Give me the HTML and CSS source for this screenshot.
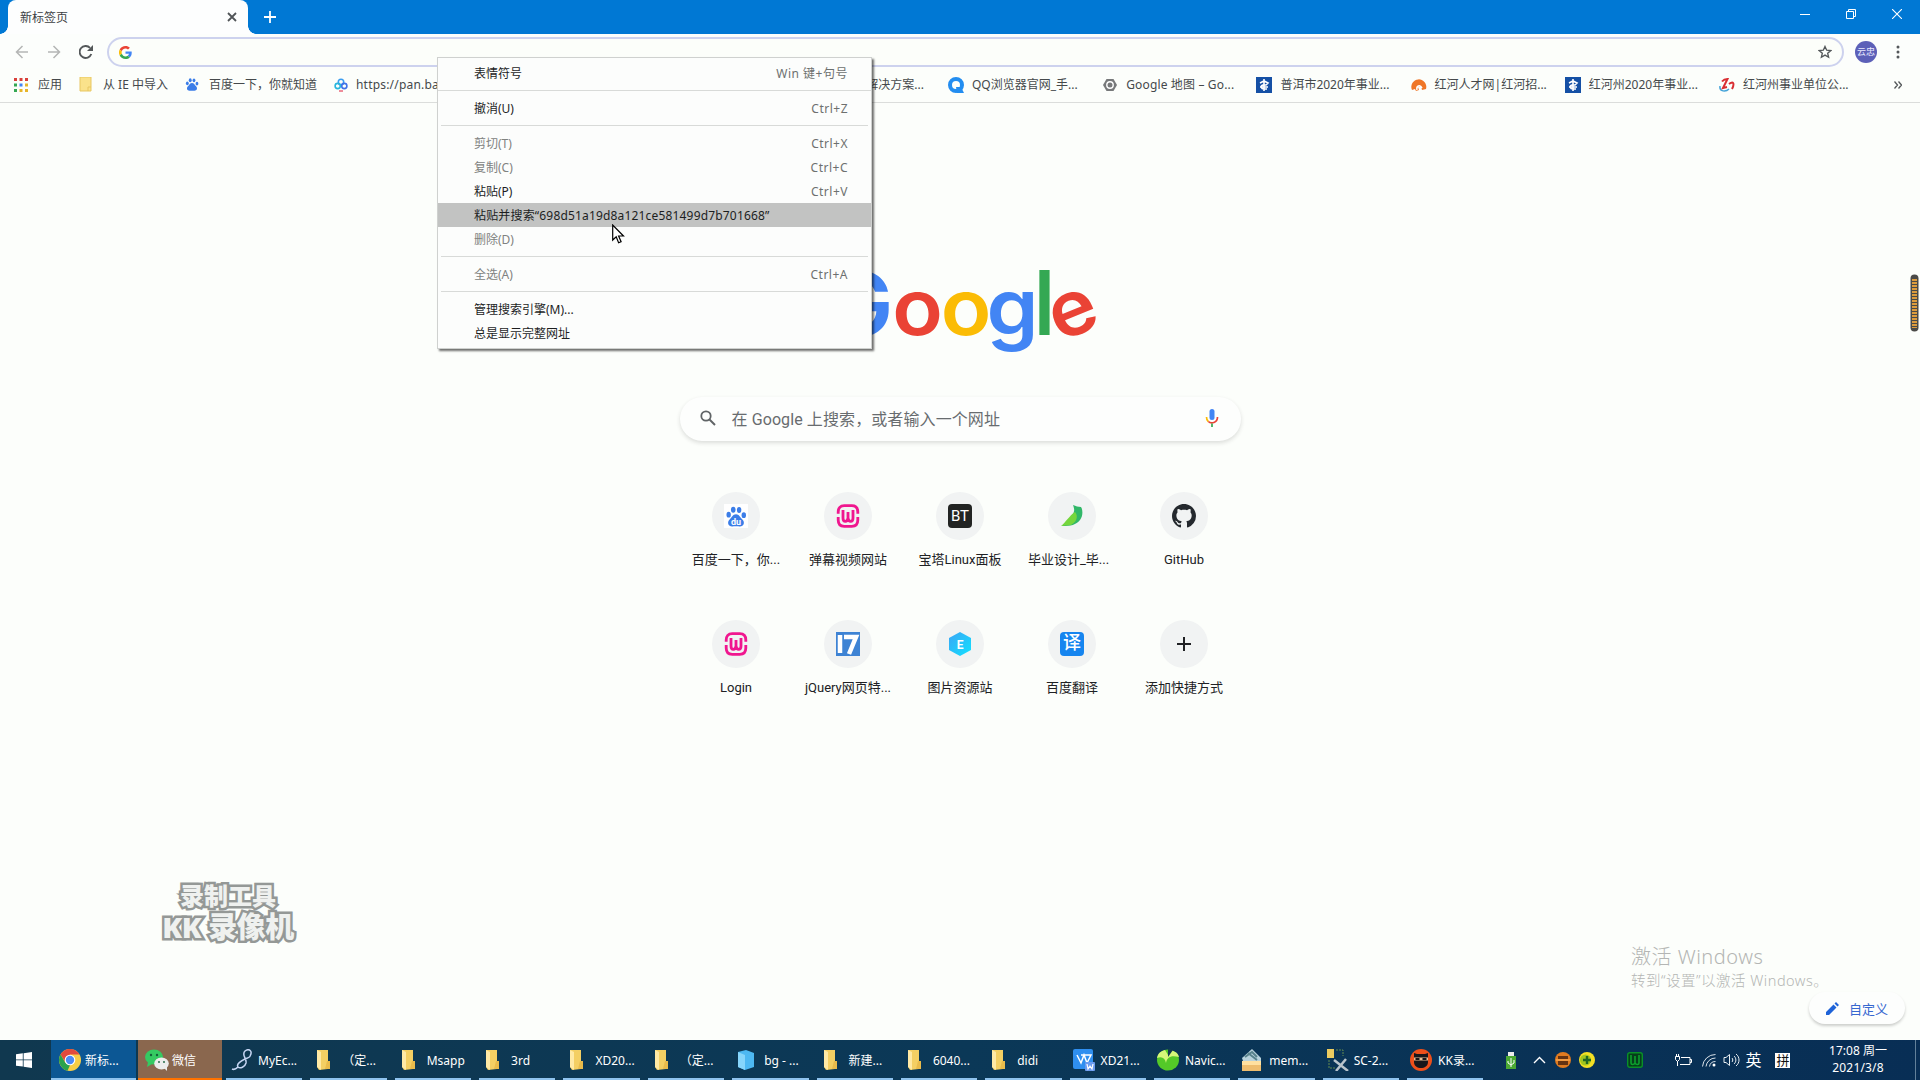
FILE: index.html
```html
<!DOCTYPE html>
<html lang="zh-CN">
<head>
<meta charset="utf-8">
<title>新标签页</title>
<link rel="stylesheet" href="styles.css">
</head>
<body>
<svg class="defs" width="0" height="0">
  <defs>
    <symbol id="folder" viewBox="0 0 16 22" preserveAspectRatio="xMinYMid meet"><path d="M2 1h11v19l-9 1-2-3z" fill="#f4cf63"/><path d="M2 1l4 2v18l-4-3z" fill="#ffe9a5"/><path d="M12 12h3v8h-5z" fill="#e9bb4b"/></symbol>
    <symbol id="paw" viewBox="0 0 24 24"><g fill="#3b7de8"><ellipse cx="4" cy="10" rx="2.4" ry="3.2"/><ellipse cx="9" cy="4.7" rx="2.5" ry="3.3"/><ellipse cx="15.4" cy="4.9" rx="2.4" ry="3.3"/><ellipse cx="20.5" cy="10.5" rx="2.4" ry="3.1"/><path d="M12 9.5c3.500 0 4.300 3.300 6.500 5.200 4 3.600 1.800 8.300-2.500 8.100-2-.1-6-.1-8 0-4.300.2-6.500-4.500-2.500-8.100C7.700 12.800 8.500 9.500 12 9.500z"/></g></symbol>
    <symbol id="wing" viewBox="0 0 24 24"><path d="M2.200 9.800V8c0-4 2-6.300 6-6.300h7.600c4 0 6 2.300 6 6.300v1.800M2.200 13v3c0 4 2 6.300 6 6.300h7.600c4 0 6-2.300 6-6.300v-3" fill="none" stroke="#f0168f" stroke-width="2.800"/><path d="M7 6v8c0 4.500 4.500 4.500 5 0V8v6c.5 4.500 5 4.500 5 0V6" fill="none" stroke="#f0168f" stroke-width="2.800"/></symbol>
    <symbol id="exam" viewBox="0 0 16 16"><path d="M0 0h16v16H0z" fill="#1550a5"/><path d="M4 6l4-2 4 2-2 2H7c-3 1-2 4 1 4h3M8 2v12M4 10h8" fill="none" stroke="#fff" stroke-width="1.600"/></symbol>
  </defs>
</svg>

<div class="screen">
  <header class="titlebar">
    <div class="tab"><span>新标签页</span>
      <svg width="10" height="10" viewBox="0 0 10 10"><path d="M1 1l8 8M9 1L1 9" stroke="#505457" stroke-width="1.800"/></svg>
    </div>
    <svg class="new-tab" width="12" height="12" viewBox="0 0 12 12"><path d="M6 0v12M0 6h12" stroke="#fff" stroke-width="1.800"/></svg>
    <div class="controls">
      <svg width="10" height="10" viewBox="0 0 10 10"><path d="M0 5.500h10" stroke="#fff"/></svg>
      <svg width="10" height="10" viewBox="0 0 10 10"><path d="M.5 2.500h7v7h-7zM2.500 2.500v-2h7v7h-2" fill="none" stroke="#fff"/></svg>
      <svg width="10" height="10" viewBox="0 0 10 10"><path d="M0 0l10 10M10 0L0 10" stroke="#fff" stroke-width="1.100"/></svg>
    </div>
  </header>

  <div class="toolbar">
    <svg width="14" height="14" viewBox="0 0 14 14"><path d="M13 7H2M7.500 1L1.500 7l6 6" fill="none" stroke="#b4b6b5" stroke-width="1.500"/></svg>
    <svg width="14" height="14" viewBox="0 0 14 14"><path d="M1 7h11M6.500 1l6 6-6 6" fill="none" stroke="#b4b6b5" stroke-width="1.500"/></svg>
    <svg width="14" height="14" viewBox="0 0 14 14"><path d="M12.300 9A6 6 0 1 1 11 2.800" fill="none" stroke="#54585a" stroke-width="1.900"/><path d="M14 0v6H8z" fill="#54585a"/></svg>
    <div class="omnibox">
      <svg width="13" height="13" viewBox="0 0 48 48"><path fill="#ea4335" d="M24 9.500c3.540 0 6.710 1.220 9.210 3.600l6.850-6.850C35.900 2.380 30.470 0 24 0 14.620 0 6.510 5.380 2.560 13.220l7.980 6.190C12.430 13.720 17.740 9.500 24 9.500z"/><path fill="#4285f4" d="M46.980 24.550c0-1.570-.15-3.090-.38-4.550H24v9.020h12.940c-.58 2.960-2.260 5.480-4.780 7.180l7.730 6c4.510-4.180 7.090-10.360 7.090-17.650z"/><path fill="#fbbc05" d="M10.530 28.590a14.500 14.500 0 0 1 0-9.180l-7.980-6.190a24 24 0 0 0 0 21.560z"/><path fill="#34a853" d="M24 48c6.480 0 11.930-2.130 15.890-5.810l-7.730-6c-2.150 1.450-4.920 2.300-8.160 2.300-6.260 0-11.570-4.220-13.470-9.910l-7.980 6.190C6.510 42.620 14.620 48 24 48z"/></svg>
      <svg width="14" height="14" viewBox="0 0 24 24"><path d="M12 2.500l2.900 6.400 7 .7-5.300 4.600 1.600 6.800-6.200-3.600L5.800 21l1.600-6.800L2.100 9.600l7-.7z" fill="none" stroke="#54585a" stroke-width="2.300"/></svg>
    </div>
    <div class="avatar">云忠</div>
    <svg width="4" height="14" viewBox="0 0 4 14"><g fill="#54585a"><circle cx="2" cy="2" r="1.500"/><circle cx="2" cy="7" r="1.500"/><circle cx="2" cy="12" r="1.500"/></g></svg>
  </div>

  <nav class="bookmarks">
    <div class="bm bm-apps"><svg width="14" height="14" viewBox="0 0 14 14"><path d="M0 0h3v3H0zM5.500 0h3v3h-3zM11 0h3v3h-3z" fill="#d9403a"/><path d="M0 5.500h3v3H0z" fill="#35a853"/><path d="M5.500 5.500h3v3h-3z" fill="#4285f4"/><path d="M11 5.500h3v3h-3zM5.500 11h3v3h-3zM11 11h3v3h-3z" fill="#e8b52a"/><path d="M0 11h3v3H0z" fill="#35a853"/></svg><span>应用</span></div>
    <div class="bm bm-ie"><svg width="14" height="15" viewBox="0 0 14 15"><path d="M1 0h11v14H1z" fill="#fae28b"/><path d="M1 0h11v14H1zM9 14v-4h3" fill="none" stroke="#e8c763"/></svg><span>从 IE 中导入</span></div>
    <div class="bm bm-baidu"><svg width="14" height="15"><use href="#paw"/></svg><span>百度一下，你就知道</span></div>
    <div class="bm bm-pan"><svg width="14" height="14" viewBox="0 0 14 14"><g fill="none" stroke-width="1.600"><circle cx="7" cy="4" r="2.700" stroke="#3b9df0"/><circle cx="3.700" cy="8" r="2.600" stroke="#28b6dd"/><circle cx="10.300" cy="8" r="2.600" stroke="#4173e8"/></g><path d="M5 13h4" stroke="#e65065" stroke-width="1.300"/></svg><span>https://pan.ba</span></div>
    <div class="bm bm-tail"><span>解决方案...</span></div>
    <div class="bm bm-site"><svg width="16" height="16" viewBox="0 0 16 16"><circle cx="8" cy="8" r="6" fill="none" stroke="#238df0" stroke-width="4"/><path d="M8 10h5l3 6H9z" fill="#238df0"/></svg><span>QQ浏览器官网_手...</span></div>
    <div class="bm bm-site"><svg width="16" height="14" viewBox="0 0 16 14"><path d="M4.500 1h7L15 7l-3.500 6h-7L1 7z" fill="#77797a"/><circle cx="8" cy="7" r="3.200" fill="none" stroke="#fff" stroke-width="1.400"/></svg><span class="wide">Google 地图 – Go...</span></div>
    <div class="bm bm-site"><svg width="16" height="16"><use href="#exam"/></svg><span>普洱市2020年事业...</span></div>
    <div class="bm bm-site"><svg width="16" height="14" viewBox="0 0 16 14"><path d="M1 12A7.500 7.500 0 1 1 15 11l-4 1-1-4-3 1 1 3-3 1-1-2z" fill="#ef7627"/><path d="M6 12c-1-4 3-6 5-2" fill="none" stroke="#fff" stroke-width="1.500"/></svg><span>红河人才网|红河招...</span></div>
    <div class="bm bm-site"><svg width="16" height="16"><use href="#exam"/></svg><span>红河州2020年事业...</span></div>
    <div class="bm bm-site"><svg width="16" height="16" viewBox="0 0 16 16"><path d="M1 9c-1 6 6 6 9 3" fill="none" stroke="#45a4d9" stroke-width="1.500"/><path d="M3 4.500C5 2 8 2 8.500 2L4 11l4-1M10 7c4-3 6-1 3 5" fill="none" stroke="#d92e32" stroke-width="2"/></svg><span>红河州事业单位公...</span></div>
    <svg class="more" width="8" height="8" viewBox="0 0 8 8"><path d="M.5.5L3.500 4l-3 3.500M4.500.5l3 3.500-3 3.500" fill="none" stroke="#54585a" stroke-width="1.300"/></svg>
  </nav>

  <main class="page">
    <svg class="logo" width="274" height="100" viewBox="0 0 274 100" role="img" aria-label="Google">
      <g class="logo-letters">
        <text transform="translate(34.500 73.500) scale(1.080 1)" font-size="90" fill="#4285f4">G</text>
        <text transform="translate(94.500 73) scale(1.080 1)" font-size="77" fill="#ea4335">o</text>
        <text transform="translate(143 73) scale(1.080 1)" font-size="77" fill="#fbbc05">o</text>
        <text transform="translate(189.500 73) scale(1.080 1.020)" font-size="77" fill="#4285f4">g</text>
        <text transform="translate(221.500 73) scale(.9 1)" font-size="89" fill="#34a853">l</text>
        <text transform="rotate(-22 250 51) translate(250 73) scale(1.040 1)" font-size="77" fill="#ea4335">e</text>
      </g>
    </svg>
    <div class="search">
      <svg width="16" height="16" viewBox="0 0 16 16"><circle cx="6" cy="6" r="4.700" fill="none" stroke="#606466" stroke-width="1.800"/><path d="M9.500 9.500l5.500 5.500" stroke="#606466" stroke-width="2"/></svg>
      <span>在 Google 上搜索，或者输入一个网址</span>
      <svg width="14" height="20" viewBox="0 0 14 20"><rect x="4.500" y="1" width="5" height="11" rx="2.500" fill="#4285f4"/><path d="M1.500 9c0 2 .6 3.500 1.800 4.500" fill="none" stroke="#fbbc05" stroke-width="1.700"/><path d="M3.300 13.500C6 16 12.500 15 12.500 9" fill="none" stroke="#ea4335" stroke-width="1.700"/><path d="M7 15.500V19" stroke="#34a853" stroke-width="1.700"/></svg>
    </div>
    <div class="tiles">
      <div class="tile"><div class="disc"><svg class="on-white" width="24" height="24" viewBox="0 0 24 24"><use href="#paw" x="1" y="1" width="22" height="23"/><text x="12" y="20.500" text-anchor="middle" font-size="9" font-weight="700" fill="#fff">du</text></svg></div><span>百度一下，你...</span></div>
      <div class="tile"><div class="disc"><svg width="24" height="24"><use href="#wing"/></svg></div><span>弹幕视频网站</span></div>
      <div class="tile"><div class="disc"><div class="badge bt">BT</div></div><span>宝塔Linux面板</span></div>
      <div class="tile"><div class="disc"><svg width="24" height="24" viewBox="0 0 24 24"><path d="M13 1c3 1 5 2 8 2 2 3 2 9-1 13-4 5-9 6-18 6 5-5 8-7 11-12 2-4 1-6 0-9z" fill="#31b768"/><path d="M1 22C6 18 9 12 15 8c4 5 1 10-4 13z" fill="#75d63c"/></svg></div><span class="pull">毕业设计_毕...</span></div>
      <div class="tile"><div class="disc"><svg width="24" height="24" viewBox="0 0 16 16"><path fill="#24292e" d="M8 0C3.580 0 0 3.580 0 8c0 3.540 2.290 6.530 5.470 7.590.4.070.55-.17.55-.38 0-.19-.01-.82-.01-1.490-2.010.37-2.530-.49-2.690-.94-.09-.23-.48-.94-.82-1.130-.28-.15-.68-.52-.01-.53.63-.01 1.080.58 1.230.82.72 1.210 1.870.87 2.330.66.07-.52.28-.87.51-1.070-1.780-.2-3.640-.89-3.640-3.950 0-.87.31-1.590.82-2.150-.08-.2-.36-1.020.08-2.120 0 0 .67-.21 2.200.82.64-.18 1.320-.27 2-.27s1.360.09 2 .27c1.530-1.040 2.200-.82 2.200-.82.44 1.100.16 1.920.08 2.120.51.56.82 1.270.82 2.150 0 3.070-1.870 3.750-3.650 3.950.29.25.54.73.54 1.480 0 1.070-.01 1.930-.01 2.200 0 .21.15.46.55.38A8.010 8.010 0 0 0 16 8c0-4.420-3.580-8-8-8z"/></svg></div><span>GitHub</span></div>
      <div class="tile"><div class="disc"><svg width="24" height="24"><use href="#wing"/></svg></div><span>Login</span></div>
      <div class="tile"><div class="disc"><svg width="24" height="24" viewBox="0 0 24 24"><path d="M0 0h24v24H0z" fill="#3e83d4"/><path d="M4 3v18M8 5h12L13 22" fill="none" stroke="#fff" stroke-width="4.500"/></svg></div><span>jQuery网页特...</span></div>
      <div class="tile"><div class="disc"><svg width="24" height="24" viewBox="0 0 24 24"><defs><linearGradient id="hex" x2="1" y2="1"><stop stop-color="#3ba5f5"/><stop offset="1" stop-color="#12e2ff"/></linearGradient></defs><path d="M12 0l11 6v12l-11 6-11-6V6z" fill="url(#hex)"/><text x="12" y="16.500" text-anchor="middle" font-size="12" font-weight="700" fill="#fff">E</text></svg></div><span>图片资源站</span></div>
      <div class="tile"><div class="disc"><div class="badge yi">译</div></div><span>百度翻译</span></div>
      <div class="tile"><div class="disc"><svg width="14" height="14" viewBox="0 0 14 14"><path d="M7 0v14M0 7h14" stroke="#202124" stroke-width="2"/></svg></div><span>添加快捷方式</span></div>
    </div>
  </main>

  <footer class="taskbar">
    <div class="start"><svg width="16" height="16" viewBox="0 0 16 16"><path d="M0 2.300l6.800-1v6.200H0zM7.600 1.200L16 0v7.500H7.600zM0 8.300h6.800v6.300L0 13.700zM7.600 8.300H16V16l-8.400-1.200z" fill="#fff"/></svg></div>
    <div class="task current"><svg width="24" height="22" viewBox="0 0 24 22"><circle cx="12" cy="11" r="11" fill="#f7cd46"/><path d="M2.500 5.500A11 11 0 0 1 21.500 5.500H12L7.500 13.500z" fill="#e14a3d"/><path d="M2.500 5.500l5 8.500 4.500 2-2.500 5.700A11 11 0 0 1 2.500 5.500z" fill="#2ba24c"/><circle cx="12" cy="11" r="5.300" fill="#fff"/><circle cx="12" cy="11" r="4.200" fill="#4c8bf5"/></svg><span>新标...</span></div>
    <div class="task alert"><svg width="24" height="22" viewBox="0 0 24 22"><ellipse cx="9" cy="8" rx="9" ry="7.500" fill="#35ca62"/><path d="M3 13l-1 5 5-3z" fill="#35ca62"/><ellipse cx="16.500" cy="14.500" rx="7.300" ry="6" fill="#ececec"/><path d="M19 19l3 3v-5z" fill="#ececec"/><g fill="#14613b"><circle cx="6" cy="6" r="1.200"/><circle cx="12" cy="6" r="1.200"/><circle cx="14" cy="13" r=".9"/><circle cx="19" cy="13" r=".9"/></g></svg><span>微信</span></div>
    <div class="task"><svg width="24" height="22" viewBox="0 0 24 22"><path d="M19 7c3-5-1-8-5-5-4 4 2 7 1 12-1 4-6 6-8 4-2-3 3-6 7-8 3-1 5-2 5-3M7 18c-2 2-4 3-6 2" fill="none" stroke="#c5d5f3" stroke-width="1.500"/></svg><span>MyEc...</span></div>
    <div class="task"><svg width="24" height="22"><use href="#folder"/></svg><span>（定...</span></div>
    <div class="task"><svg width="24" height="22"><use href="#folder"/></svg><span>Msapp</span></div>
    <div class="task"><svg width="24" height="22"><use href="#folder"/></svg><span>3rd</span></div>
    <div class="task"><svg width="24" height="22"><use href="#folder"/></svg><span>XD20...</span></div>
    <div class="task"><svg width="24" height="22"><use href="#folder"/></svg><span>（定...</span></div>
    <div class="task"><svg width="24" height="22" viewBox="3 0 24 22"><path d="M4 3l8-2 8 3v14l-9 3-7-3z" fill="#4db8f2"/><path d="M4 3l7 3v15l-7-3z" fill="#86d5fb"/></svg><span>bg - ...</span></div>
    <div class="task"><svg width="24" height="22"><use href="#folder"/></svg><span>新建...</span></div>
    <div class="task"><svg width="24" height="22"><use href="#folder"/></svg><span>6040...</span></div>
    <div class="task"><svg width="24" height="22"><use href="#folder"/></svg><span>didi</span></div>
    <div class="task app"><svg width="24" height="22" viewBox="0 0 24 22"><rect x="1" width="20" height="20" rx="2" fill="#2f8ff0"/><path d="M5 6l4 8 3-8 3 8 4-8H9" fill="none" stroke="#fff" stroke-width="1.500"/><rect x="13" y="13" width="10" height="9" rx="1" fill="#6b9cf0"/><path d="M15 15l1 5 2-3 2 3 1-5" fill="none" stroke="#fff" stroke-width="1.200"/></svg><span>XD21...</span></div>
    <div class="task app"><svg width="24" height="22" viewBox="0 0 24 22"><ellipse cx="12" cy="11" rx="11" ry="10.500" fill="#54c928"/><path d="M1 9c5-2 8 0 9 5 1-6 5-8 13-6-1-5-7-7-10-7l-1 5-3-5C5 2 2 4 1 9z" fill="#d5f779"/><path d="M12 0l0 8 5-7z" fill="#12384f"/></svg><span>Navic...</span></div>
    <div class="task app"><svg width="24" height="22" viewBox="0 0 24 22"><path d="M2 9L12 0l9 9v6H4z" fill="#b8d2dc"/><path d="M5 8l7-5 5 5M8 4l9 7" stroke="#58828c" stroke-width="2" fill="none"/><path d="M2 12h19v10H2z" fill="#eebd6f"/><path d="M2 12h19v4H2z" fill="#ffe0a0"/></svg><span>mem...</span></div>
    <div class="task app"><svg width="24" height="22" viewBox="0 0 24 22"><path d="M2 0h7v9H2z" fill="#eccb60"/><path d="M11 1h7v6M4 11v8h6" fill="none" stroke="#628b50" stroke-dasharray="2 1"/><path d="M9 11l14 11M21 10L11 22" stroke="#b9c4cc" stroke-width="2.500"/></svg><span>SC-2...</span></div>
    <div class="task app"><svg width="24" height="22" viewBox="0 0 24 22"><circle cx="12" cy="11" r="11" fill="#ed501b"/><path d="M5 4l3 1h8l3-1v9c0 8-14 8-14 0z" fill="#17171b"/><path d="M5 8.500h14v3H5z" fill="#e9bd93"/><path d="M6.500 10h4M13.500 10h4" stroke="#17171b" stroke-width="1.800"/></svg><span>KK录...</span></div>
    <div class="tray">
      <svg class="t-usb" width="10" height="17" viewBox="0 0 10 17"><path d="M2 0h6v4H2z" fill="#ededed"/><path d="M0 4h10v13H0z" fill="#4ba933"/><path d="M5 6v9M2 9v2l3 2 3-2V8" fill="none" stroke="#fff"/></svg>
      <svg class="t-up" width="13" height="8" viewBox="0 0 13 8"><path d="M1 7l5.500-5.500L12 7" fill="none" stroke="#fff" stroke-width="1.400"/></svg>
      <svg class="t-o" width="16" height="16" viewBox="0 0 16 16"><circle cx="8" cy="8" r="8" fill="#e07b20"/><path d="M3 4h10v9H3z" fill="#653311"/><path d="M1 8h14" stroke="#f19b42" stroke-width="2"/></svg>
      <svg class="t-y" width="16" height="16" viewBox="0 0 16 16"><circle cx="8" cy="8" r="8" fill="#f4df24"/><circle cx="6.500" cy="8" r="5.500" fill="#a2c51e"/><path d="M8 4v8M4 8h8" stroke="#216722" stroke-width="2.400"/></svg>
      <svg class="t-g" width="16" height="16" viewBox="0 0 16 16"><rect x=".7" y=".7" width="14.600" height="14.600" rx="2" fill="#063e1b" stroke="#0a9027" stroke-width="1.400"/><path d="M4 3v8c0 2 3 2 4 0V4v7c1 2 4 2 4 0V3" fill="none" stroke="#0ca12d" stroke-width="1.600"/></svg>
      <svg class="t-bat" width="17" height="13" viewBox="0 0 17 13"><path d="M6 3.500h9v7H5M15 5.500h1.500v3H15M.5 2.500h4v3l-2 2-2-2zM1.500 0v2M3.500 0v2M2.500 7v5" fill="none" stroke="#fff"/></svg>
      <svg class="t-wifi" width="14" height="13" viewBox="0 0 14 13"><g fill="none" stroke="#d9e1e8"><path d="M.5 12.500A13 13 0 0 1 13.500.5M4 12.500A9.500 9.500 0 0 1 13.500 4M7.500 12.500a6 6 0 0 1 6-5"/></g><circle cx="12" cy="11" r="1.500" fill="#fff"/></svg>
      <svg class="t-vol" width="17" height="14" viewBox="0 0 17 14"><path d="M1 4.500h2L6.500 1.500v11L3 9.500H1zM9 5c1 1 1 3 0 4M11 3c2.500 2 2.500 6 0 8M13 1c4 3 4 9 0 12" fill="none" stroke="#e9eff3"/></svg>
      <span class="lang">英</span><span class="ime">拼</span>
      <div class="clock"><span>17:08 周一</span><span class="wide">2021/3/8</span></div>
    </div>
  </footer>

  <div class="recorder"><span class="rec-a">录制工具</span><span class="rec-b">KK 录像机</span></div>
  <div class="activate"><span class="act-a">激活 Windows</span><span class="act-b">转到“设置”以激活 Windows。</span></div>
  <div class="customize"><svg width="13" height="13" viewBox="0 0 13 13"><path d="M0 13v-3L7.500 2.500l3 3L3 13zM8.500 1.500L10 0l3 3-1.500 1.500z" fill="#1f63d8"/></svg><span>自定义</span></div>
  <svg class="side-handle" width="9" height="58" viewBox="0 0 9 58"><rect x=".5" y=".5" width="8" height="57" rx="4" fill="#4a4a47"/><path d="M4.500 5v49" stroke="#dc9c3d" stroke-width="5" stroke-dasharray="2 1"/></svg>

  <div class="menu">
    <div class="mi"><span>表情符号</span><kbd>Win 键+句号</kbd></div>
    <hr class="full">
    <div class="mi"><span>撤消(U)</span><kbd>Ctrl+Z</kbd></div>
    <hr>
    <div class="mi off"><span>剪切(T)</span><kbd>Ctrl+X</kbd></div>
    <div class="mi off"><span>复制(C)</span><kbd>Ctrl+C</kbd></div>
    <div class="mi"><span>粘贴(P)</span><kbd>Ctrl+V</kbd></div>
    <div class="mi hot"><span>粘贴并搜索“698d51a19d8a121ce581499d7b701668”</span></div>
    <div class="mi off"><span>删除(D)</span></div>
    <hr>
    <div class="mi off"><span>全选(A)</span><kbd>Ctrl+A</kbd></div>
    <hr>
    <div class="mi"><span>管理搜索引擎(M)...</span></div>
    <div class="mi"><span>总是显示完整网址</span></div>
  </div>
  <svg class="cursor" width="13" height="20" viewBox="0 0 13 20"><path d="M.7 1v15l3.500-3.300L6.600 18.700l2.500-1L6.600 12H11.500z" fill="#fff" stroke="#000" stroke-width="1.200"/></svg>
</div>
</body>
</html>
```
FILE: styles.css
```css
* { box-sizing: border-box; }
body { margin: 0; overflow: hidden; font-family: "Noto Sans", "Noto Sans CJK SC", sans-serif; font-size: 12px; color: #303335; }
.defs { position: absolute; }
svg { display: block; flex: none; }
span { white-space: nowrap; }
.wide { letter-spacing: .15px; }
.screen { position: relative; width: 1920px; height: 1080px; display: flex; flex-direction: column; background: #fcfefb; overflow: hidden; }

.titlebar { height: 34px; flex: none; display: flex; align-items: center; background: #0078d4; padding-left: 8px; }
.tab { position: relative; width: 240px; height: 34px; display: flex; align-items: center; justify-content: space-between; padding: 0 11px 0 12px; background: #fdfefe; border-radius: 8px 8px 0 0; color: #3c4043; }
.tab::before, .tab::after { content: ""; position: absolute; bottom: 0; width: 8px; height: 8px; }
.tab::before { left: -8px; background: radial-gradient(circle at 0 0, #0078d4 7.500px, #fdfefe 8px); }
.tab::after { right: -8px; background: radial-gradient(circle at 100% 0, #0078d4 7.500px, #fdfefe 8px); }
.new-tab { margin-left: 16px; }
.controls { margin-left: auto; display: flex; gap: 36px; padding: 0 18px 6px 0; }

.toolbar { height: 34px; flex: none; display: flex; align-items: center; padding: 2px 20px 0 15px; background: #fcfefc; }
.toolbar > svg:nth-of-type(2) { margin-left: 18px; }
.toolbar > svg:nth-of-type(3) { margin-left: 18px; }
.omnibox { margin-left: 14px; width: 1737px; height: 30px; border: 2px solid #cdd2ee; border-radius: 15px; display: flex; align-items: center; justify-content: space-between; padding: 0 10px; background: #fcfefa; }
.avatar { width: 22px; height: 22px; margin-left: 11px; border-radius: 50%; background: #5c60b8; color: #e9eaff; font-size: 9px; line-height: 21px; text-align: center; white-space: nowrap; }
.avatar + svg { margin-left: 19px; }

.bookmarks { height: 35px; flex: none; display: flex; align-items: center; padding: 0 0 1px 14px; border-bottom: 1px solid #dbdddb; color: #45494b; }
.bm { display: flex; align-items: center; gap: 10px; flex: none; line-height: 18px; }
.bm-apps { width: 65px; }
.bm-ie { width: 106px; }
.bm-baidu { width: 149px; }
.bm-pan { width: 430px; letter-spacing: .2px; gap: 8px; }
.bm-tail { width: 160px; justify-content: flex-end; }
.bm-tail + .bm-site { margin-left: 24px; }
.bm-site { width: 154.200px; gap: 8px; }
.more { margin-left: 21px; }

.page { flex: 1; display: flex; flex-direction: column; align-items: center; }
.logo { margin-top: 159px; overflow: visible; }
.logo-letters { font-family: Inter, sans-serif; font-weight: 600; text-anchor: middle; }
.search { width: 561px; height: 44px; margin-top: 35px; border-radius: 22px; display: flex; align-items: center; padding: 0 22px 2px 20px; background: #fdfefd; box-shadow: 0 2px 4px #20212426; font-family: Roboto, "Noto Sans CJK SC", sans-serif; font-size: 16px; letter-spacing: .1px; color: #686c6f; }
.search span { flex: 1; margin-left: 16px; }
.tiles { width: 560px; margin-top: 41px; display: grid; grid-template-columns: repeat(5, 112px); grid-auto-rows: 128px; font-family: Roboto, "Noto Sans CJK SC", sans-serif; }
.tile { display: flex; flex-direction: column; align-items: center; padding-top: 10px; gap: 10px; font-size: 13px; line-height: 20px; color: #202124; }
.pull { margin-right: 7px; }
.disc { width: 48px; height: 48px; border-radius: 50%; background: #f1f3f3; display: flex; align-items: center; justify-content: center; }
.on-white { background: #fff; }
.badge { width: 24px; height: 24px; border-radius: 4px; color: #fff; text-align: center; line-height: 24px; }
.bt { background: #222423; font-size: 15px; }
.yi { background: #1685ef; font-size: 18px; font-weight: 500; line-height: 22px; }

.taskbar { height: 40px; flex: none; display: flex; background: linear-gradient(90deg, #10384f, #0b3857 50%, #082e55); color: #fff; }
.start { width: 51px; display: flex; align-items: center; justify-content: center; padding-right: 3px; }
.task { position: relative; width: 84.360px; flex: none; display: flex; align-items: center; gap: 3px; padding-left: 9px; overflow: hidden; }
.task.app { padding-left: 6px; gap: 5px; }
.task::after { content: ""; position: absolute; left: 4px; right: 4px; bottom: 0; height: 2px; background: #8fc3ee; }
.task.current, .task.alert { width: 85px; padding-left: 7px; }
.task.current { background: #0c5794; margin-right: 2px; }
.task.alert { background: #8a674e; width: 84px; }
.task.current::after, .task.alert::after { left: 0; right: 0; }
.task.alert::after { background: #ff7200; }
.tray { flex: 1; display: flex; align-items: center; padding-left: 19px; margin-right: 4px; border-right: 1px solid #62809a; white-space: nowrap; }
.t-up { margin-left: 17px; }
.t-o { margin-left: 9px; }
.t-y { margin-left: 8px; }
.t-g { margin-left: 32px; }
.t-bat { margin-left: 32px; }
.t-wifi { margin-left: 10px; }
.t-vol { margin-left: 7px; }
.lang { margin-left: 5px; font-size: 16px; line-height: 20px; }
.ime { margin-left: 14px; width: 15px; height: 15px; background: #fff; color: #111; font-size: 13px; line-height: 14px; text-align: center; }
.clock { margin-left: auto; width: 114px; display: flex; flex-direction: column; align-items: center; line-height: 17px; padding-bottom: 2px; }

.recorder { position: absolute; left: 159px; top: 880px; width: 138px; display: flex; flex-direction: column; align-items: center; color: #eff1ef; font-weight: 900; -webkit-text-stroke: 5px #949896; paint-order: stroke fill; }
.rec-a { font-size: 24px; line-height: 32px; }
.rec-b { font-size: 29px; line-height: 30px; letter-spacing: -.5px; }
.activate { position: absolute; left: 1631px; top: 943px; display: flex; flex-direction: column; color: #b4b6b4; }
.act-a { font-size: 20px; line-height: 27px; font-weight: 300; letter-spacing: .5px; }
.act-b { font-size: 14.500px; line-height: 21px; font-weight: 300; letter-spacing: .5px; }
.customize { position: absolute; left: 1809px; top: 992px; width: 96px; height: 32px; border-radius: 16px; display: flex; align-items: center; gap: 10px; padding-left: 17px; background: #fdfefd; box-shadow: 0 2px 3px #00000030; color: #3768d0; font-size: 13px; }
.side-handle { position: absolute; left: 1910px; top: 274px; }

.menu { position: absolute; left: 437px; top: 57px; width: 435px; height: 292px; padding: 3px 0; background: #fcfdfc; border: 1px solid #cfd1cf; box-shadow: 2px 2px 2px #00000090; color: #1c1e1f; }
.mi { height: 24px; display: flex; align-items: center; justify-content: space-between; padding: 2px 23px 0 36px; line-height: 20px; }
.mi.off { color: #808280; }
.mi.hot { background: #c2c3c2; letter-spacing: .17px; }
.mi kbd { font: inherit; color: #6d706f; letter-spacing: .5px; }
.menu hr { height: 1px; border: 0; margin: 5px 3px; background: #d8dad8; }
.menu hr.full { margin: 5px 0; }
.cursor { position: absolute; left: 612px; top: 224px; }
```
